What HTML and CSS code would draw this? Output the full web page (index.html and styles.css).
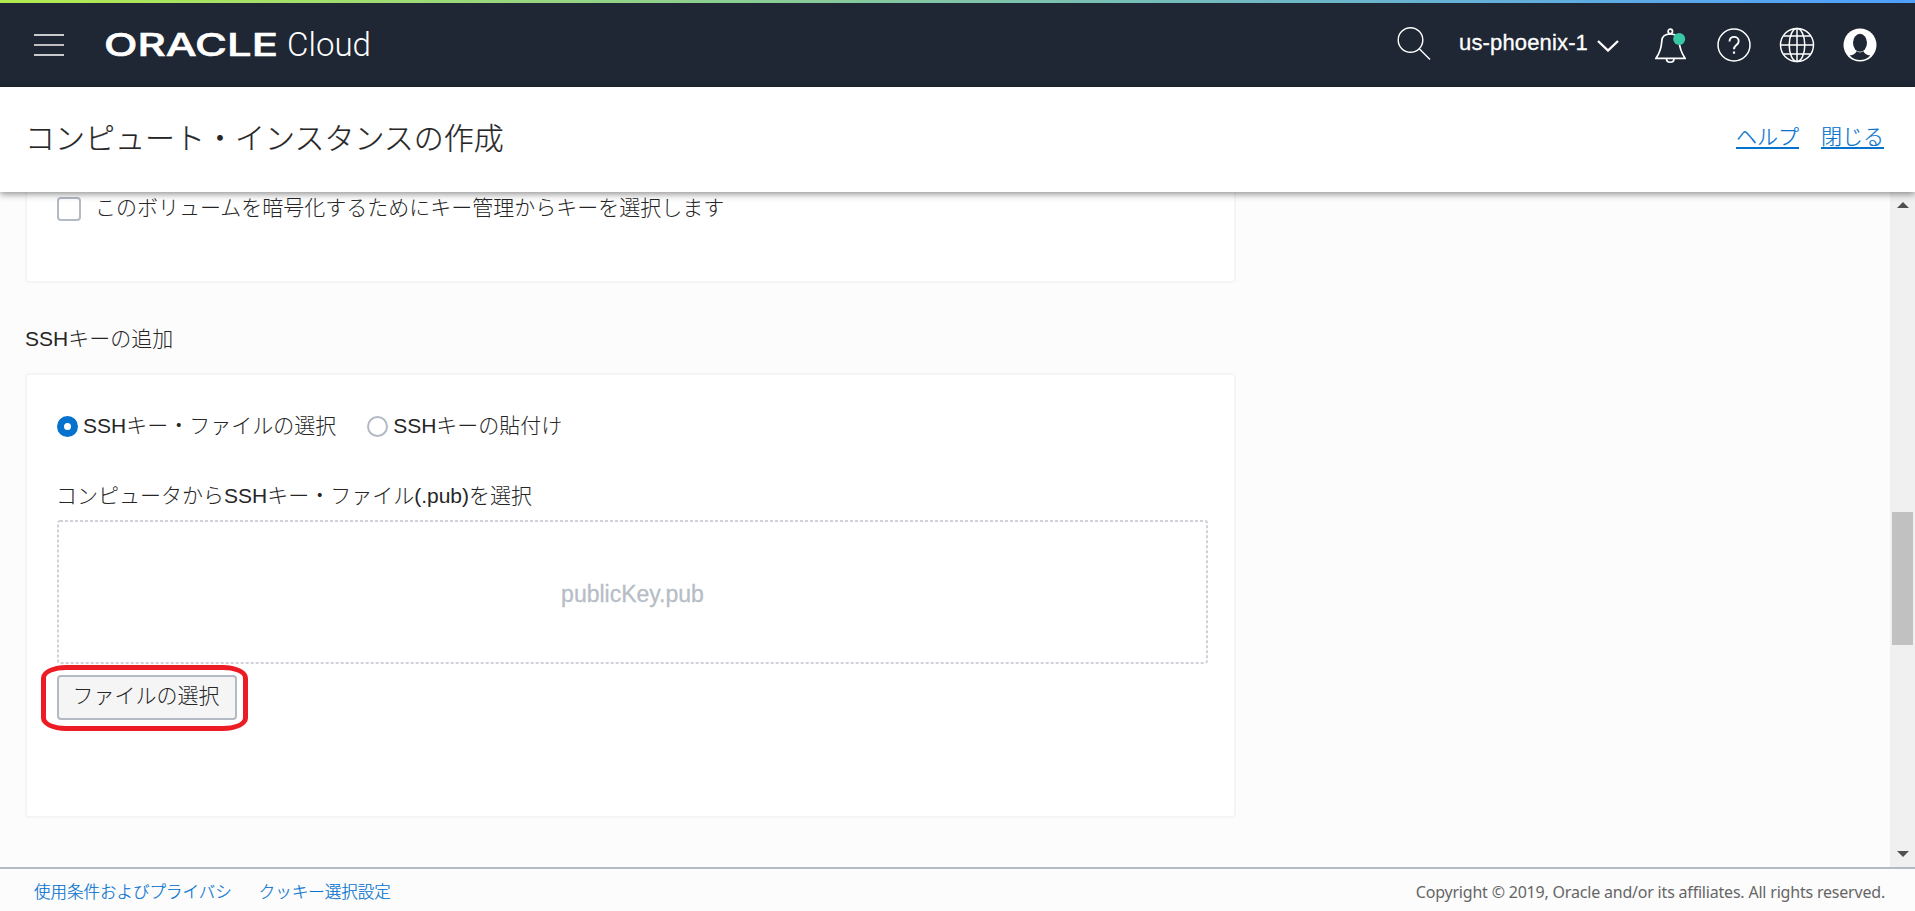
FILE: index.html
```html
<!DOCTYPE html>
<html lang="ja">
<head>
<meta charset="utf-8">
<title>Oracle Cloud</title>
<link rel="stylesheet" href="styles.css">
</head>
<body>
<div class="app">
  <div class="stripe"></div>
  <header class="topbar">
    <button class="menu" aria-label="menu"><svg width="30" height="22" viewBox="0 0 30 22" fill="none"><path d="M0 1h30M0 21h30" stroke="#fff" stroke-width="1.3"/><path d="M0 11h30" stroke="#bfbfbf" stroke-width="2"/></svg></button>
    <svg class="logo" width="270" height="40" viewBox="0 0 270 40" fill="#fff">
      <text class="logo-oracle" x="-1" y="30.500" textLength="174" lengthAdjust="spacingAndGlyphs">ORACLE</text>
      <text class="logo-cloud" x="182" y="30.500" textLength="84" lengthAdjust="spacingAndGlyphs">Cloud</text>
    </svg>
    <nav class="tools">
      <svg class="search" width="34" height="34" viewBox="0 0 34 34" fill="none" stroke="#fff" stroke-width="1.4"><circle cx="13.5" cy="13" r="12.3"/><path d="M22.5 22 33 32.5"/></svg>
      <span class="region">us-phoenix-1</span>
      <svg class="chevron" width="22" height="12" viewBox="0 0 22 12" fill="none" stroke="#fff" stroke-width="2.400"><path d="M1 1l10 9.5L21 1"/></svg>
      <svg class="bell" width="31" height="36" viewBox="0 0 31 36" fill="none" stroke="#fff" stroke-width="1.7"><circle cx="15.3" cy="3.4" r="2.2"/><path d="M1 30.300h29c-4.500-7-5.500-11-6-17.300C23.500 8 20 6 15.300 6S7 8 6.800 13C6.500 19.300 5.500 23.800 1 30.300z"/><path d="M11.500 30.500c0 5 7.500 5 7.500 0"/><circle cx="24.200" cy="11" r="6" fill="#3ac7a5" stroke="none"/></svg>
      <svg class="help" width="34" height="34" viewBox="0 0 34 34" fill="none" stroke="#fff" stroke-width="1.5"><circle cx="17" cy="17" r="16"/><path d="M12.500 13.500c0-6.300 9.200-6 9.200-.300 0 4-4.700 3.800-4.700 8" stroke-width="1.900"/><path d="M17 23.500v2.200" stroke-width="2.200"/></svg>
      <svg class="globe" width="36" height="36" viewBox="0 0 36 36" fill="none" stroke="#fff" stroke-width="1.500"><circle cx="18" cy="18" r="16.500"/><ellipse cx="18" cy="18" rx="7.800" ry="16.500"/><path d="M18 1.500v33M1.500 18h33M4.500 9h27M4.500 27h27"/></svg>
      <svg class="user" width="34" height="34" viewBox="0 0 34 34"><circle cx="17" cy="17" r="16.500" fill="#fff"/><ellipse cx="17" cy="14.800" rx="7" ry="9" fill="#1e2733"/><path d="M13.500 23.300c2 1.500 5 1.500 7 0 .7 2.200 3 3.700 6.800 4.200-5.500 6-15.100 6-20.600 0 3.800-.5 6.100-2 6.800-4.200z" fill="#1e2733"/></svg>
    </nav>
  </header>
  <div class="titlebar">
    <h1>コンピュート・インスタンスの作成</h1>
    <div class="title-links"><a>ヘルプ</a><a>閉じる</a></div>
  </div>
  <div class="viewport">
    <main class="content">
      <section class="card card-volume">
        <label class="check"><span class="checkbox"></span><span>このボリュームを暗号化するためにキー管理からキーを選択します</span></label>
      </section>
      <h2>SSHキーの追加</h2>
      <section class="card card-ssh">
        <div class="radios">
          <label class="radio"><span class="dot on"></span><span>SSHキー・ファイルの選択</span></label>
          <label class="radio"><span class="dot"></span><span>SSHキーの貼付け</span></label>
        </div>
        <p class="field-label">コンピュータからSSHキー・ファイル(.pub)を選択</p>
        <div class="dropzone"><svg class="dashes"><rect x="1" y="1" width="1149" height="142" rx="2"/></svg><span>publicKey.pub</span></div>
        <div class="file-row"><button class="file-btn">ファイルの選択</button><span class="highlight"></span></div>
      </section>
    </main>
    <div class="scrollbar">
      <svg width="12" height="6" viewBox="0 0 12 6"><path d="M0 6 6 0l6 6z" fill="#505050"/></svg>
      <span class="thumb"></span>
      <svg width="12" height="6" viewBox="0 0 12 6"><path d="M0 0l6 6 6-6z" fill="#505050"/></svg>
    </div>
  </div>
  <footer class="footer">
    <div class="foot-links"><a>使用条件およびプライバシ</a><a>クッキー選択設定</a></div>
    <span class="copyright">Copyright © 2019, Oracle and/or its affiliates. All rights reserved.</span>
  </footer>
</div>
</body>
</html>
```
FILE: styles.css
```css
* { box-sizing: border-box; }
body { margin: 0; font: 300 21px/30px "Liberation Sans", "Noto Sans CJK JP", sans-serif; color: #262626; background: #fcfcfc; }
button { font: inherit; color: inherit; }
svg { display: block; flex: none; }
.app { display: flex; flex-direction: column; height: 911px; width: 1915px; overflow: hidden; }
.stripe { height: 3px; flex: none; background: linear-gradient(90deg, #b2eb4f, #4e9fff); }
.topbar { height: 84px; flex: none; background: #1e2733; display: flex; align-items: flex-start; padding-left: 34px; }
.menu { border: 0; background: none; padding: 0; margin-top: 31px; }
.logo { margin: 22px 0 0 41px; }
.logo-oracle { font: 500 31px "Inter", sans-serif; stroke: #fff; stroke-width: .6px; }
.logo-cloud { font: 300 33px "Roboto", sans-serif; }
.tools { display: flex; align-items: flex-start; margin-left: auto; padding-right: 38px; color: #fff; }
.search { margin-top: 24px; }
.region { width: 129px; white-space: nowrap; font-size: 22px; line-height: 30px; letter-spacing: .15px; margin: 25px 0 0 28px; -webkit-text-stroke: .3px #fff; }
.chevron { margin: 37px 0 0 9px; }
.bell { margin: 25px 0 0 36px; }
.help { margin: 25px 0 0 31px; }
.globe { margin: 24px 0 0 28px; }
.user { margin: 25px 0 0 28px; }
.titlebar { height: 105px; flex: none; background: #fff; display: flex; justify-content: space-between; padding: 0 31px 0 25px; box-shadow: 0 2px 7px rgba(0,0,0,.45); position: relative; z-index: 1; }
h1 { margin: 30px 0 0; font-size: 30px; line-height: 44px; font-weight: 300; -webkit-text-stroke: .2px #262626; }
.title-links { display: flex; gap: 22px; margin-top: 35px; }
.title-links a { height: 27px; line-height: 30px; border-bottom: 2px solid #0572ce; }
a { color: #0572ce; -webkit-text-stroke: .2px #0572ce; }
.viewport { flex: 1; min-height: 0; display: flex; overflow: hidden; }
.content { flex: 1; padding-left: 25px; }
.card { width: 1211px; border: 2px solid #f5f5f5; border-radius: 4px; background: #fff; padding: 0 26px 0 30px; }
.card-volume { height: 91px; border-top: 0; border-radius: 0 0 4px 4px; padding-top: 1px; }
.check { display: flex; align-items: center; gap: 14px; }
.checkbox { width: 24px; height: 24px; border: 2px solid #b4bac4; border-radius: 4px; margin-top: 2px; background: #fff; }
h2 { margin: 41px 0 0; font-size: 21px; line-height: 30px; font-weight: 300; height: 49px; }
.card-ssh { height: 445px; padding-top: 36px; }
.radios { display: flex; gap: 31px; }
.radio { display: flex; align-items: center; gap: 5px; }
.dot { width: 21px; height: 21px; border: 2px solid #b4bac4; border-radius: 50%; }
.dot.on { border: 7.500px solid #0572ce; background: #fff; }
.field-label { margin: 40px 0 9px -1px; }
.dropzone { position: relative; width: 1151px; height: 144px; display: flex; align-items: center; justify-content: center; font-size: 23px; color: #b6bdc6; padding-top: 3px; -webkit-text-stroke: .3px #b6bdc6; }
.dashes { position: absolute; inset: 0; width: 100%; height: 100%; }
.dashes rect { fill: none; stroke: #cfd2d8; stroke-width: 2; stroke-dasharray: 3 2; }
.file-row { position: relative; margin-top: 11px; width: 180px; }
.file-btn { display: block; width: 180px; height: 45px; border: 2px solid #b4bac4; border-radius: 4px; background: #f5f5f5; padding: 0 2px 4px 0; }
.highlight { position: absolute; left: -16px; top: -10px; width: 207px; height: 66px; border: 5px solid #ed1c24; border-radius: 25px / 13px; }
.scrollbar { width: 25px; background: #f0f0f0; display: flex; flex-direction: column; align-items: center; padding: 10px 0; }
.thumb { width: 21px; height: 133px; background: #c1c1c1; margin: 304px 0 206px; flex: none; }
.footer { height: 44px; flex: none; border-top: 2px solid #b4bac4; display: flex; justify-content: space-between; padding: 8px 30px 0 34px; font-size: 16.500px; line-height: 30px; }
.foot-links { display: flex; gap: 27px; }
.copyright { font: 400 16px/30px "Noto Sans", sans-serif; letter-spacing: -.2px; color: #666; }
```
